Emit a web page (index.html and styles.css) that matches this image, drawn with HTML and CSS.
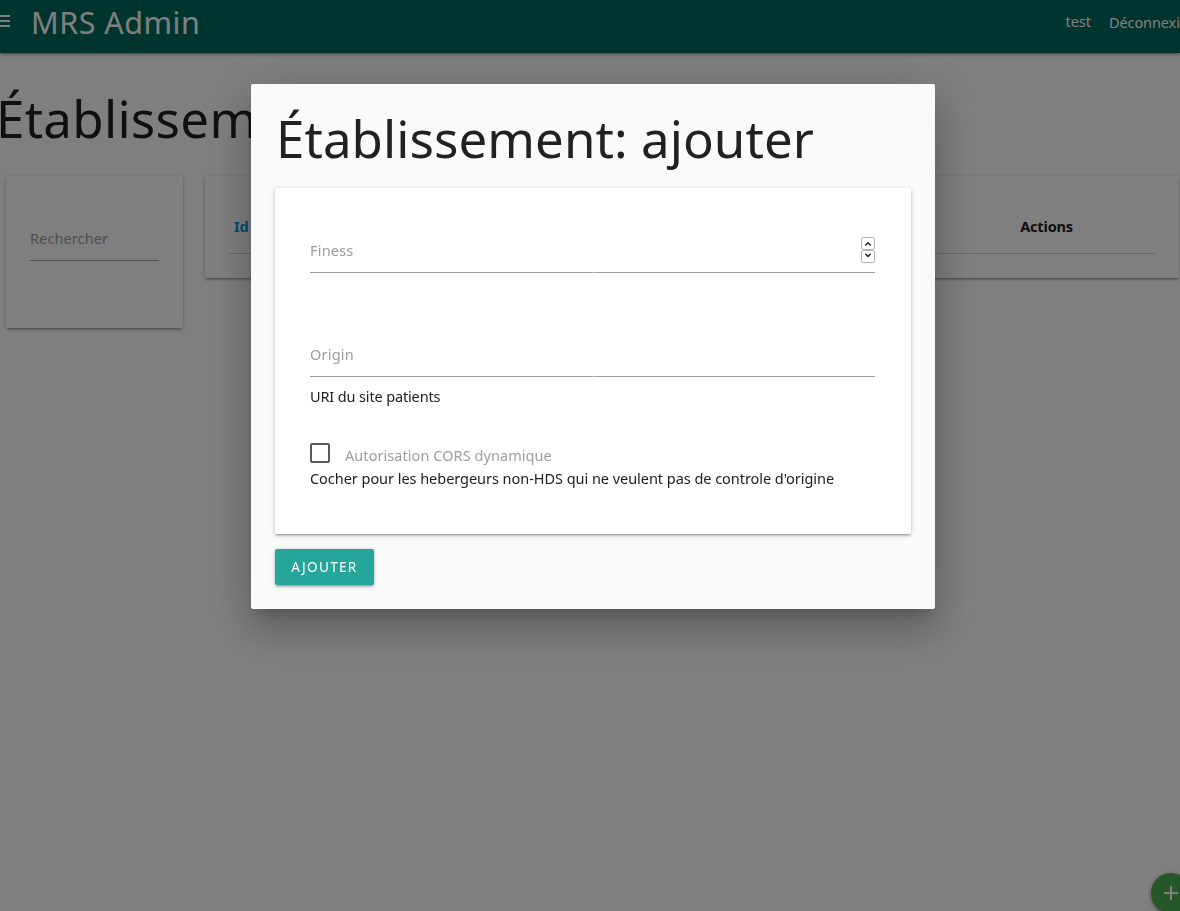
FILE: index.html
```
<!DOCTYPE html>
<html lang="fr">
<head>
<meta charset="utf-8">
<title>MRS Admin</title>
<link rel="stylesheet" href="styles.css">
</head>
<body>
<header class="topbar">
  <svg class="menu-icon" width="18" height="12" viewBox="0 0 18 12"><path d="M0 0h18v2H0zM0 5h18v2H0zM0 10h18v2H0z" fill="#fff"/></svg>
  <span class="brand">MRS Admin</span>
  <nav class="links"><a class="user">test</a><a class="logout">Déconnexion</a></nav>
</header>
<main class="page">
  <h1 class="title page-title">Établissements</h1>
  <div class="columns">
    <section class="card search"><div class="search-field">Rechercher</div></section>
    <section class="card listing">
      <div class="table-head"><a class="th-id">Id</a><span class="th-actions">Actions</span></div>
    </section>
  </div>
</main>
<div class="fab"><svg width="14" height="14" viewBox="0 0 14 14"><path d="M6 0h2v6h6v2H8v6H6V8H0V6h6z" fill="#fff"/></svg></div>
<div class="overlay">
  <div class="modal">
    <h1 class="title modal-title">Établissement: ajouter</h1>
    <div class="card form">
      <div class="field"><span class="label finess">Finess</span>
        <span class="spinner">
          <svg class="step" width="14" height="13" viewBox="0 0 14 13"><rect x=".5" y=".5" width="13" height="12" rx="2" fill="#fff" stroke="#b5b5b1"/><path d="M4.3 8.5 7 5.8l2.7 2.7" fill="none" stroke="#222" stroke-width="1.5"/></svg>
          <svg class="step" width="14" height="13" viewBox="0 0 14 13"><rect x=".5" y=".5" width="13" height="12" rx="2" fill="#fff" stroke="#b5b5b1"/><path d="M4.3 3.8 7 6.5l2.7-2.7" fill="none" stroke="#222" stroke-width="1.5"/></svg>
        </span>
      </div>
      <div class="field origin-field"><span class="label origin">Origin</span></div>
      <div class="help uri">URI du site patients</div>
      <div class="check-row"><span class="box"></span><span class="label cors">Autorisation CORS dynamique</span></div>
      <div class="help cocher">Cocher pour les hebergeurs non-HDS qui ne veulent pas de controle d'origine</div>
    </div>
    <button class="submit">AJOUTER</button>
  </div>
</div>
</body>
</html>
```
FILE: styles.css
```
* { box-sizing: border-box; }
html, body { height: 100%; }
body { margin: 0; overflow: hidden; background: #fff; color: #212121; font: 14.5px/22px "Noto Sans", sans-serif; }
.topbar { display: flex; height: 53px; background: #00695c; color: #fff; box-shadow: 0 2px 2px rgba(0,0,0,.14), 0 3px 1px -2px rgba(0,0,0,.12), 0 1px 5px rgba(0,0,0,.2); }
.menu-icon { flex: none; margin: 15px 0 0 -8px; }
.brand { margin-left: 21px; font-size: 30.5px; font-weight: 400; line-height: 44px; letter-spacing: .5px; white-space: nowrap; }
.links { display: flex; flex: none; margin-left: auto; margin-right: -19px; line-height: 43px; gap: 18px; }
.logout { width: 90px; padding-top: 1px; letter-spacing: -.1px; }
.title { margin: 0; font-size: 51px; line-height: 60px; font-weight: 400; white-space: nowrap; letter-spacing: .07px; }
.page-title { margin: 35px 0 0 -4px; letter-spacing: .3px; }
.columns { display: flex; gap: 22px; margin-top: 28px; padding: 0 1px 0 6px; align-items: flex-start; }
.card { background: #fff; border-radius: 2px; box-shadow: 0 2px 2px rgba(0,0,0,.14), 0 3px 1px -2px rgba(0,0,0,.12), 0 1px 5px rgba(0,0,0,.2); }
.search { width: 177px; height: 152px; padding: 40px 24px; }
.search-field { height: 45px; padding-top: 11px; border-bottom: 1px solid #9e9e9e; color: #9e9e9e; letter-spacing: .1px; }
.listing { flex: 1; height: 102px; padding: 24px; }
.table-head { display: flex; height: 54px; padding: 15px 82px 0 5px; border-bottom: 1px solid #d0d0d0; justify-content: space-between; font-weight: 700; letter-spacing: -.15px; }
.th-id { color: #039be5; }
.fab { position: fixed; left: 1151px; top: 873px; display: flex; align-items: center; justify-content: center; width: 40px; height: 40px; border-radius: 50%; background: #4caf50; box-shadow: 0 2px 3px rgba(0,0,0,.3), 0 1px 6px rgba(0,0,0,.2); }
.overlay { position: fixed; inset: 0; padding: 84px 0 0 251px; background: rgba(0,0,0,.5); }
.modal { width: 684px; height: 525px; padding: 24px; border-radius: 2px; background: #fafafa; box-shadow: 0 24px 38px 3px rgba(0,0,0,.14), 0 9px 46px 8px rgba(0,0,0,.12), 0 11px 15px -7px rgba(0,0,0,.2); }
.modal-title { height: 80px; padding-left: 1px; line-height: 61px; }
.form { height: 346px; padding: 40px 36px 0 35px; }
.field { display: flex; justify-content: space-between; height: 45px; padding: 9px 0 1px; background: linear-gradient(90deg, #9e9e9e 283px, #d6d6d6 283px 284px, #9e9e9e 284px) bottom / 100% 1px no-repeat; }
.label { color: #9e9e9e; line-height: 27px; letter-spacing: .2px; white-space: nowrap; }
.origin-field { margin-top: 59px; }
.spinner { display: flex; flex-direction: column; }
.step { display: block; }
.help { white-space: nowrap; }
.uri { margin-top: 8px; letter-spacing: -.14px; }
.check-row { display: flex; gap: 15px; height: 24px; margin-top: 36px; }
.box { width: 20px; height: 20px; border: 2px solid #5a5a5a; border-radius: 2px; }
.cors { line-height: 25px; letter-spacing: .06px; }
.cocher { letter-spacing: -.04px; }
.submit { display: block; width: 99px; height: 36px; margin-top: 15px; padding: 0; border: 0; border-radius: 2px; background: #26a69a; color: #fff; font: 13.5px/36px "Noto Sans", sans-serif; letter-spacing: 1.35px; box-shadow: 0 2px 2px rgba(0,0,0,.14), 0 3px 1px -2px rgba(0,0,0,.12), 0 1px 5px rgba(0,0,0,.2); }
```
